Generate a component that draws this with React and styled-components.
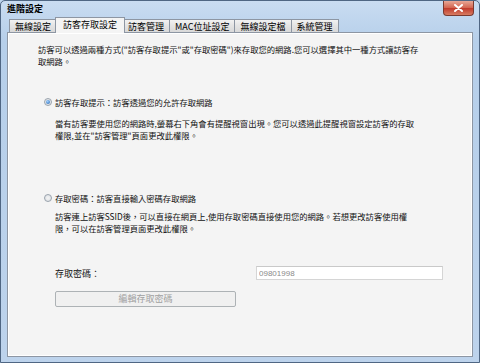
import React from "react";
import styled, { createGlobalStyle } from "styled-components";

const GlobalStyle = createGlobalStyle`
  html, body {
    margin: 0;
    padding: 0;
    width: 480px;
    height: 363px;
    overflow: hidden;
    background: #bcd3ec;
    font-family: "Noto Sans CJK TC", "Liberation Sans", sans-serif;
  }
`;

const Window = styled.div`
  width: 480px;
  height: 363px;
  box-sizing: border-box;
  border: 1px solid #4f6683;
  border-radius: 5px 5px 0 0;
  background: linear-gradient(#c9dcf1, #b6cfea 40px, #bdd3ec);
  display: flex;
  flex-direction: column;
  padding: 0 6px 5px 6px;
`;

const TitleBar = styled.div`
  height: 16px;
  display: flex;
  align-items: center;
  justify-content: space-between;
`;

const Title = styled.span`
  font-size: 9px;
  font-weight: bold;
  color: #000;
  line-height: 16px;
`;

const CloseButton = styled.div`
  width: 31px;
  height: 15px;
  margin-top: -1px;
  margin-right: -1px;
  border: 1px solid #7a3a30;
  border-top: none;
  border-radius: 0 0 4px 4px;
  background: linear-gradient(#e8a796, #d2634e 50%, #c0392b 51%, #d77c62);
  display: flex;
  align-items: center;
  justify-content: center;
  box-sizing: border-box;
`;

const TabRow = styled.div`
  display: flex;
  align-items: flex-end;
  height: 16px;
  padding-left: 2px;
`;

const Tab = styled.div`
  font-size: 9px;
  line-height: 14px;
  height: ${(p) => (p.$active ? "16px" : "14px")};
  padding: 0 ${(p) => (p.$active ? "7px" : "5px")};
  margin: 0 ${(p) => (p.$active ? "-2px" : "0")};
  position: relative;
  z-index: ${(p) => (p.$active ? 2 : 1)};
  box-sizing: border-box;
  border: 1px solid #8d96a3;
  border-bottom: ${(p) => (p.$active ? "none" : "1px solid #8d96a3")};
  border-left-width: ${(p) => (p.$first || p.$active ? "1px" : "0")};
  background: ${(p) =>
    p.$active ? "#f4f4f4" : "linear-gradient(#f2f2f2, #e3e3e3 50%, #d9d9d9)"};
  color: #000;
  white-space: nowrap;
`;

const Panel = styled.div`
  flex: 1;
  margin-top: -1px;
  background: #f4f4f4;
  border: 1px solid #8d96a3;
  box-shadow: inset 0 0 0 1px #fff;
  padding: 10px 0 0 30px;
  font-size: 8.3px;
  color: #111;
  display: flex;
  flex-direction: column;
`;

const Para = styled.div`
  line-height: 12px;
  white-space: nowrap;
  margin-left: ${(p) => p.$indent || 0}px;
`;

const Option = styled.label`
  display: flex;
  align-items: center;
  gap: 3px;
  line-height: 12px;
  margin-top: ${(p) => p.$top}px;
  margin-left: 6px;
  margin-bottom: ${(p) => p.$bottom}px;
`;

const Radio = styled.span`
  width: 8px;
  height: 8px;
  border-radius: 50%;
  border: 1px solid #9aa3ad;
  background: radial-gradient(circle, #f4f4f4, #d9dde2);
  display: flex;
  align-items: center;
  justify-content: center;
  box-sizing: border-box;

  &::after {
    content: "";
    width: 4px;
    height: 4px;
    border-radius: 50%;
    background: ${(p) => (p.$checked ? "radial-gradient(circle at 40% 35%, #9fd0ff, #1d5fae)" : "transparent")};
  }
`;

const FieldRow = styled.div`
  display: flex;
  align-items: flex-start;
  margin-top: 34px;
  margin-left: 17px;
`;

const FieldLabel = styled.span`
  font-size: 9px;
  width: 201px;
  line-height: 12px;
`;

const Input = styled.input`
  width: 187px;
  height: 14px;
  box-sizing: border-box;
  margin-top: -2px;
  border: 1px solid #d5d5d5;
  border-top-color: #c9c9c9;
  background: #fff;
  font-family: "Liberation Sans", sans-serif;
  font-size: 8px;
  color: #8a8a8a;
  padding: 0 2px;
  outline: none;
`;

const EditButton = styled.button`
  width: 181px;
  height: 16px;
  margin-top: 11px;
  margin-left: 17px;
  box-sizing: border-box;
  border: 1px solid #adb2b5;
  border-radius: 2px;
  background: #f0f0f0;
  color: #a0a0a0;
  font-family: "Noto Sans CJK TC", sans-serif;
  font-size: 9px;
  line-height: 12px;
  padding: 0;
`;

const CloseIcon = () => (
  <svg width="9" height="8" viewBox="0 0 9 8">
    <path d="M1 1 L8 7 M8 1 L1 7" stroke="#fff" strokeWidth="2" strokeLinecap="round" />
  </svg>
);

const tabs = ["無線設定", "訪客存取設定", "訪客管理", "MAC位址設定", "無線設定檔", "系統管理"];

export default function App() {
  return (
    <>
      <GlobalStyle />
      <Window>
        <TitleBar>
          <Title>進階設定</Title>
          <CloseButton>
            <CloseIcon />
          </CloseButton>
        </TitleBar>
        <TabRow>
          {tabs.map((t, i) => (
            <Tab key={t} $first={i === 0} $active={i === 1}>
              {t}
            </Tab>
          ))}
        </TabRow>
        <Panel>
          <Para>訪客可以透過兩種方式("訪客存取提示"或"存取密碼")來存取您的網路.您可以選擇其中一種方式讓訪客存</Para>
          <Para>取網路。</Para>

          <Option $top={29} $bottom={9}>
            <Radio $checked />
            訪客存取提示：訪客透過您的允許存取網路
          </Option>
          <Para $indent={17}>當有訪客要使用您的網路時,螢幕右下角會有提醒視窗出現。您可以透過此提醒視窗設定訪客的存取</Para>
          <Para $indent={17}>權限,並在"訪客管理"頁面更改此權限。</Para>

          <Option $top={51} $bottom={6}>
            <Radio />
            存取密碼：訪客直接輸入密碼存取網路
          </Option>
          <Para $indent={17}>訪客連上訪客SSID後，可以直接在網頁上,使用存取密碼直接使用您的網路。若想更改訪客使用權</Para>
          <Para $indent={17}>限，可以在訪客管理頁面更改此權限。</Para>

          <FieldRow>
            <FieldLabel>存取密碼：</FieldLabel>
            <Input defaultValue="09801998" disabled />
          </FieldRow>
          <EditButton disabled>編輯存取密碼</EditButton>
        </Panel>
      </Window>
    </>
  );
}
